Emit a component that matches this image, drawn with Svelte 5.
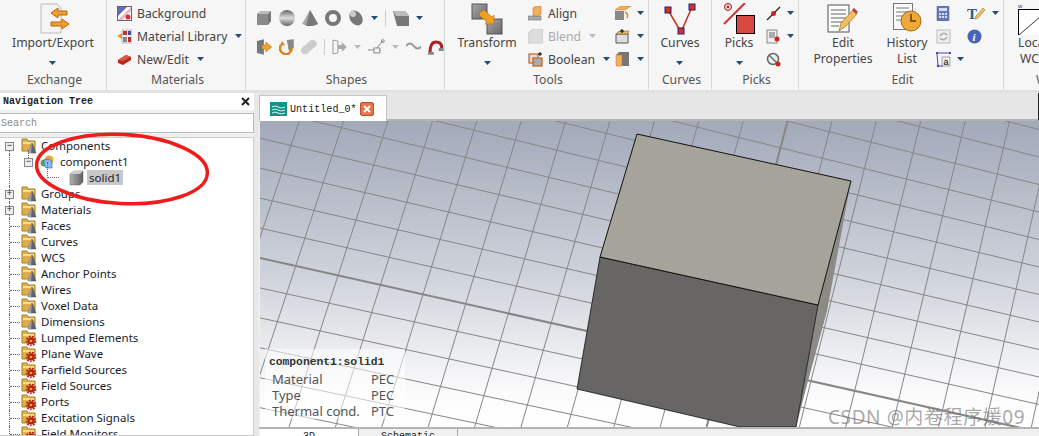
<script>
  const groups = ["Groups", "Materials"];
  const plainFolders = ["Faces", "Curves", "WCS", "Anchor Points", "Wires", "Voxel Data", "Dimensions"];
  const gearFolders = ["Lumped Elements", "Plane Wave", "Farfield Sources", "Field Sources", "Ports", "Excitation Signals", "Field Monitors"];

  // viewport grid, two line families fanned out a little for the perspective
  const top = 123;
  const bottom = 429;
  const steep = [];
  for (let i = -14; i < 12; i++) {
    const xt = 610 + i * 44.4;
    const xb = xt - 89 + (xt - 610) * 0.045;
    steep.push({ x1: xt, y1: top, x2: xb, y2: bottom, thick: i === 4 });
  }
  const shallow = [];
  for (let k = -16; k < 8; k++) {
    const yl = 327 + k * 29;
    const yr = 434 + k * 27.5;
    const slope = (yr - yl) / 479;
    shallow.push({ x1: 260, y1: yl - slope * 300, x2: 1039, y2: yr, thick: k === 0 });
  }
</script>

{#snippet arrow()}
  <svg class="arrow" width="7" height="4" viewBox="0 0 7 4"><path d="M0 0h7L3.500 4z" fill="#1f4e79" /></svg>
{/snippet}

{#snippet folder(gear)}
  <svg class="ticon" width="16" height="16" viewBox="0 0 16 16">
    <path d="M1 1h5l1 2h7v10H1z" fill="#e0b050" stroke="#a67c1e" />
    <path d="M2 4h11v2H2z" fill="#f5dc96" />
    {#if gear}
      <circle cx="10" cy="11" r="3.500" fill="#b81c1c" />
      <circle cx="10" cy="11" r="4.500" fill="none" stroke="#b81c1c" stroke-width="1.800" stroke-dasharray="1.700 1.400" />
      <circle cx="10" cy="11" r="1.300" fill="#f0c040" />
    {:else}
      <path d="M11 5l4 10H7z" fill="#5f6672" stroke="#4a4f58" stroke-width="0.500" />
      <path d="M11 5l-1 10H7z" fill="#a0a7b3" />
    {/if}
  </svg>
{/snippet}

{#snippet cubeSmall(c)}
  <svg width="16" height="16" viewBox="0 0 16 16">
    <path d="M1 4l4-3h10v10l-3 4H1z" fill={c} />
    <path d="M1 4h11v11H1z" fill="#8a8a8a" />
    <path d="M1 4l4-3h10l-3 3z" fill="#bbb" />
  </svg>
{/snippet}

<div class="app">
  <header class="ribbon">
    <section class="group" style="width: 107px">
      <div class="body">
        <div class="big">
          <svg width="32" height="32" viewBox="0 0 32 32">
            <path d="M4 1h16l4 4v25H4z" fill="#f4f4f4" stroke="#bbb" />
            <path d="M14 10l7-5v3h9v4h-9v3z" fill="#f0a030" stroke="#b8660e" />
            <path d="M32 21l-7-5v3h-11v4h11v3z" fill="#f0a030" stroke="#b8660e" />
          </svg>
          <span>Import/Export</span>
          {@render arrow()}
        </div>
      </div>
      <div class="label">Exchange</div>
    </section>

    <section class="group" style="width: 139px">
      <div class="body stack">
        <div class="item">
          <svg width="15" height="15" viewBox="0 0 15 15"><rect x="0.500" y="0.500" width="14" height="14" fill="#fff" stroke="#666" /><path d="M1 1h9L1 10z" fill="#6a6ab8" /><path d="M14 1v4L5 14H1z" fill="#e8b8c0" /><circle cx="11" cy="11" r="2.500" fill="#d83030" /></svg>
          <span>Background</span>
        </div>
        <div class="item">
          <svg width="15" height="15" viewBox="0 0 15 15"><path d="M0 7l5-3v6z" fill="#ee9a20" /><rect x="5" y="1" width="10" height="13" fill="#eee" stroke="#888" stroke-width="0.500" /><rect x="6" y="2" width="4" height="4" fill="#c03030" /><rect x="11" y="2" width="3" height="4" fill="#4050a0" /><rect x="6" y="8" width="4" height="5" fill="#888" /><rect x="11" y="8" width="3" height="5" fill="#c03030" /></svg>
          <span>Material Library</span>
          {@render arrow()}
        </div>
        <div class="item">
          <svg width="15" height="15" viewBox="0 0 15 15"><path d="M1 8l8-5 5 2v3l-8 5-5-2z" fill="#b8281c" /><path d="M1 8l8-5 5 2-8 4z" fill="#d85848" /></svg>
          <span>New/Edit</span>
          {@render arrow()}
        </div>
      </div>
      <div class="label">Materials</div>
    </section>

    <section class="group" style="width: 199px">
      <div class="body shapes">
        <div class="irow">
          {@render cubeSmall("#777")}
          <svg width="16" height="16" viewBox="0 0 16 16"><defs><linearGradient id="sph" x1="0" y1="0" x2="0" y2="1"><stop offset="0" stop-color="#666" /><stop offset="0.500" stop-color="#ddd" /><stop offset="1" stop-color="#666" /></linearGradient></defs><circle cx="8" cy="8" r="8" fill="url(#sph)" /></svg>
          <svg width="16" height="16" viewBox="0 0 16 16"><path d="M8 0L0 14q8 4 16 0z" fill="#aaa" /><path d="M8 0L4 16q6 1 12-2z" fill="#777" /></svg>
          <svg width="16" height="16" viewBox="0 0 16 16"><circle cx="8" cy="8" r="6" fill="none" stroke="#777" stroke-width="4" /></svg>
          <svg width="16" height="16" viewBox="0 0 16 16"><ellipse cx="8" cy="8" rx="6" ry="8" transform="rotate(-35 8 8)" fill="#777" /><ellipse cx="5" cy="4" rx="3" ry="3" fill="#ccc" /></svg>
          {@render arrow()}
          <i class="vsep"></i>
          <svg width="16" height="16" viewBox="0 0 16 16"><path d="M0 1h12l4 5v10H4z" fill="#777" /><path d="M0 1h12l4 5H3z" fill="#bbb" /></svg>
          {@render arrow()}
        </div>
        <div class="irow">
          <svg width="16" height="16" viewBox="0 0 16 16"><path d="M1 2l7-2v16l-7-2z" fill="#777" /><path d="M6 6h4V3l6 5-6 5v-3H6z" fill="#f0a030" stroke="#b8660e" stroke-width="0.500" /></svg>
          <svg width="16" height="16" viewBox="0 0 16 16"><path d="M8 1l7-1v9l-5 3z" fill="#888" /><path d="M2 6a6 6 0 1 0 11 3" fill="none" stroke="#e08018" stroke-width="2.500" /><path d="M3 2l-2 5 5-1z" fill="#e08018" /></svg>
          <svg class="dim" width="16" height="16" viewBox="0 0 16 16"><rect x="-1" y="4" width="18" height="8" rx="4" transform="rotate(-40 8 8)" fill="#ccc" /></svg>
          <i class="vsep"></i>
          <svg class="dim" width="16" height="16" viewBox="0 0 16 16"><path d="M1 1l5 1v12l-5 1z" fill="none" stroke="#999" /><path d="M6 6h4V3l5 5-5 5v-3H6z" fill="#aaa" /></svg>
          <span class="dimarrow">{@render arrow()}</span>
          <svg class="dim" width="18" height="16" viewBox="0 0 18 16"><rect x="6" y="9" width="6" height="5" fill="none" stroke="#888" /><path d="M0 11h6M12 11h1M9 9l6-7" stroke="#888" /><circle cx="15" cy="2" r="1.500" fill="none" stroke="#888" /></svg>
          <span class="dimarrow">{@render arrow()}</span>
          <svg class="dim" width="16" height="16" viewBox="0 0 16 16"><path d="M0 7q4-5 8 0t8 0" fill="none" stroke="#999" stroke-width="2" /></svg>
          <svg width="16" height="16" viewBox="0 0 16 16"><path d="M2 15q0-12 6-12t6 6" fill="none" stroke="#b02020" stroke-width="3" /><path d="M0 13h6v3H0zM11 9h5v3h-5z" fill="#888" /></svg>
        </div>
      </div>
      <div class="label">Shapes</div>
    </section>

    <section class="group" style="width: 204px">
      <div class="body tools">
        <div class="big" style="width: 78px">
          <svg width="32" height="32" viewBox="0 0 32 32">
            <defs><linearGradient id="sq" x1="0" y1="0" x2="1" y2="1"><stop offset="0" stop-color="#aaa" /><stop offset="1" stop-color="#666" /></linearGradient></defs>
            <rect x="1" y="1" width="15" height="15" fill="url(#sq)" stroke="#555" />
            <rect x="16" y="16" width="15" height="15" fill="url(#sq)" stroke="#555" />
            <path d="M9 9l4-2 8 7 2-2v9H14l2-2-8-7z" fill="#f0a020" stroke="#b86a10" stroke-width="0.600" />
          </svg>
          <span>Transform</span>
          {@render arrow()}
        </div>
        <div class="stack" style="width: 84px; margin-left: 2px">
          <div class="item">
            <svg width="15" height="15" viewBox="0 0 15 15"><path d="M0 10h13v4H0z" fill="#aaa" stroke="#666" stroke-width="0.500" /><path d="M5 2l3-2h5v8l-2 2H5z" fill="#f0b060" stroke="#b86a10" stroke-width="0.500" /></svg>
            <span>Align</span>
          </div>
          <div class="item disabled">
            <svg width="15" height="15" viewBox="0 0 15 15"><path d="M0 14V7q1-7 8-7h7v14z" fill="#ddd" stroke="#ccc" /></svg>
            <span>Blend</span>
            {@render arrow()}
          </div>
          <div class="item">
            <svg width="15" height="15" viewBox="0 0 15 15"><rect x="1" y="2" width="9" height="9" fill="#ddd" stroke="#c8601a" stroke-width="1.200" /><rect x="5" y="6" width="9" height="8" fill="#aaa" stroke="#c8601a" stroke-width="1.200" /><path d="M12 0v4M10 2h4" stroke="#000" /></svg>
            <span>Boolean</span>
            {@render arrow()}
          </div>
        </div>
        <div class="stack side" style="margin-left: 3px">
          <div class="item">
            <svg width="16" height="15" viewBox="0 0 16 15"><path d="M0 4l6-4h10l-6 4z" fill="#f0b060" stroke="#b86a10" stroke-width="0.500" /><path d="M0 5h9v9H0z" fill="#888" /><path d="M10 6a4 4 0 0 1 2 6" fill="none" stroke="#e08018" stroke-width="1.500" /></svg>
            {@render arrow()}
          </div>
          <div class="item">
            <svg width="16" height="15" viewBox="0 0 16 15"><path d="M1 5h12v9H1z" fill="#ddd" stroke="#555" /><path d="M1 5l3-3h10l-1 3z" fill="#f0b060" stroke="#555" stroke-width="0.500" /><path d="M7 0v4M5 2h4" stroke="#000" /></svg>
            {@render arrow()}
          </div>
          <div class="item">
            <svg width="16" height="15" viewBox="0 0 16 15"><path d="M1 3l3-3h10v14H1z" fill="#777" /><path d="M1 3h6v11H1z" fill="#f0b060" stroke="#c07020" stroke-width="0.500" /></svg>
            {@render arrow()}
          </div>
        </div>
      </div>
      <div class="label">Tools</div>
    </section>

    <section class="group" style="width: 63px">
      <div class="body">
        <div class="big">
          <svg width="32" height="32" viewBox="0 0 32 32">
            <path d="M4 7l13 22L28 4" fill="none" stroke="#c83020" stroke-width="1.500" />
            <rect x="1" y="4" width="6" height="6" fill="#d83020" stroke="#202080" />
            <rect x="25" y="1" width="6" height="6" fill="#d83020" stroke="#202080" />
            <rect x="14" y="25" width="6" height="6" fill="#d83020" stroke="#202080" />
          </svg>
          <span>Curves</span>
          {@render arrow()}
        </div>
      </div>
      <div class="label">Curves</div>
    </section>

    <section class="group" style="width: 87px">
      <div class="body picks">
        <div class="big" style="width: 54px">
          <svg width="32" height="32" viewBox="0 0 32 32">
            <circle cx="5" cy="4" r="3.500" fill="#f0d0d0" stroke="#a02020" /><circle cx="5" cy="4" r="1.200" fill="#a02020" />
            <path d="M1 21L22 0" stroke="#d03030" stroke-width="2" />
            <rect x="13.500" y="12.500" width="18" height="18" fill="#d84a40" stroke="#000" />
          </svg>
          <span>Picks</span>
          {@render arrow()}
        </div>
        <div class="stack side">
          <div class="item">
            <svg width="15" height="15" viewBox="0 0 15 15"><path d="M1 14L14 1" stroke="#222" stroke-width="1.200" /><circle cx="7.500" cy="7.500" r="2.500" fill="#d02020" /></svg>
            {@render arrow()}
          </div>
          <div class="item">
            <svg width="15" height="15" viewBox="0 0 15 15"><rect x="1" y="1" width="10" height="13" fill="#eee" stroke="#888" /><path d="M3 4h6M3 6h6M3 8h6" stroke="#666" /><circle cx="11" cy="10" r="2.500" fill="#d02020" /></svg>
            {@render arrow()}
          </div>
          <div class="item">
            <svg width="15" height="15" viewBox="0 0 15 15"><circle cx="7" cy="7" r="5.500" fill="#eee" stroke="#666" stroke-width="1.500" /><path d="M3 3l8 8" stroke="#666" stroke-width="1.500" /><circle cx="12" cy="12" r="2.500" fill="#d02020" /></svg>
          </div>
        </div>
      </div>
      <div class="label">Picks</div>
    </section>

    <section class="group" style="width: 205px">
      <div class="body edit">
        <div class="big" style="width: 88px">
          <svg width="32" height="32" viewBox="0 0 32 32">
            <rect x="1" y="2" width="21" height="27" fill="#fafafa" stroke="#555" />
            <path d="M4 7h15M4 11h15M4 15h15M4 19h12M4 23h8" stroke="#666" />
            <path d="M12 28l2-8 12-13 4 4-12 13z" fill="#f0c060" stroke="#8a6020" stroke-width="0.600" />
            <path d="M25 7l2-2 4 4-2 2z" fill="#b84030" />
          </svg>
          <span class="twoline">Edit<br />Properties</span>
        </div>
        <div class="big" style="width: 48px; margin-left: -4px">
          <svg width="32" height="32" viewBox="0 0 32 32">
            <rect x="2.500" y="0.500" width="19" height="26" fill="#fafafa" stroke="#777" />
            <path d="M5 5h13M5 9h13M5 13h8M5 17h6" stroke="#777" />
            <circle cx="20" cy="18" r="10" fill="#f0a838" stroke="#a86810" />
            <path d="M20 11v7h5" fill="none" stroke="#6b3a08" stroke-width="1.500" />
          </svg>
          <span class="twoline">History<br />List</span>
        </div>
        <div class="stack side" style="margin-left: 5px">
          <div class="item">
            <svg width="15" height="15" viewBox="0 0 15 15"><rect x="1" y="0" width="12" height="15" rx="1" fill="#6878b8" stroke="#405090" stroke-width="0.500" /><path d="M3 2h8v3H3z" fill="#cfe0f4" /><path d="M3 7h2v2H3zM6 7h2v2H6zM9 7h2v2H9zM3 10h2v2H3zM6 10h2v2H6zM9 10h2v2H9z" fill="#d8e0f0" /></svg>
          </div>
          <div class="item">
            <svg class="dim" width="15" height="15" viewBox="0 0 15 15"><rect x="1" y="1" width="13" height="13" fill="#eee" stroke="#bbb" /><path d="M4 7a4 4 0 0 1 7-1M11 8a4 4 0 0 1-7 1" fill="none" stroke="#aaa" stroke-width="1.500" /></svg>
          </div>
          <div class="item">
            <svg width="15" height="15" viewBox="0 0 15 15"><path d="M1 1h13M1 1l1 13M2 14h5" fill="none" stroke="#5040b0" /><rect x="6" y="5" width="8" height="9" fill="#eee" stroke="#555" stroke-width="0.500" /><circle cx="1" cy="1" r="1.200" fill="#5040b0" /><circle cx="14" cy="1" r="1.200" fill="#5040b0" /><circle cx="2" cy="14" r="1.200" fill="#5040b0" /><text x="7.500" y="13" font-size="9" font-family="Liberation Sans">a</text></svg>
            {@render arrow()}
          </div>
        </div>
        <div class="stack side" style="margin-left: 3px">
          <div class="item">
            <svg width="19" height="15" viewBox="0 0 19 15"><text x="0" y="13" font-size="15" font-weight="bold" fill="#2a5a90" font-family="Liberation Serif">T</text><path d="M8 13l1-3 7-8 2 2-7 8z" fill="#f0c060" stroke="#8a6020" stroke-width="0.500" /></svg>
            {@render arrow()}
          </div>
          <div class="item">
            <svg width="15" height="15" viewBox="0 0 15 15"><circle cx="7.500" cy="7.500" r="7" fill="#4a64b8" /><text x="5.500" y="12" font-size="11" font-weight="bold" font-style="italic" fill="#fff" font-family="Liberation Serif">i</text></svg>
          </div>
        </div>
      </div>
      <div class="label">Edit</div>
    </section>

    <section class="group last">
      <div class="body">
        <div class="big wcsbox">
          <svg width="32" height="32" viewBox="0 0 32 32"><text x="0" y="5" font-size="6" fill="#4030a0" font-family="Liberation Sans">w</text><rect x="0.500" y="6.500" width="30" height="26" fill="#fff" stroke="#000" /><path d="M1 32L30 7" stroke="#333" /></svg>
          <span class="twoline">Local<br />WCS</span>
        </div>
      </div>
      <div class="label lastlabel">WCS</div>
    </section>
  </header>

  <main class="work">
    <aside class="nav">
      <div class="navtitle">
        <span>Navigation Tree</span>
        <svg width="9" height="9" viewBox="0 0 9 9"><path d="M1 1l7 7M8 1l-7 7" stroke="#222" stroke-width="2" /></svg>
      </div>
      <div class="search">Search</div>
      <div class="tree">
        <div class="row">
          <i class="guide first"></i><i class="box">−</i>
          {@render folder(false)}
          <span>Components</span>
        </div>
        <div class="row">
          <i class="guide"></i>
          <i class="indent"><i class="box small">−</i></i>
          <svg class="ticon" width="15" height="15" viewBox="0 0 15 15"><circle cx="9" cy="5" r="4.500" fill="#e8a830" /><circle cx="4" cy="8" r="3.500" fill="#58a848" /><path d="M4 5l5-1 3 3v6H6l-2-3z" fill="#8ab8f0" stroke="#3060a0" stroke-width="0.600" /></svg>
          <span>component1</span>
        </div>
        <div class="row">
          <i class="guide"></i>
          <i class="indent deep"></i>
          <svg class="ticon" width="15" height="16" viewBox="0 0 15 16">
            <defs><linearGradient id="sol" x1="0" y1="0" x2="1" y2="0"><stop offset="0" stop-color="#b0b0b0" /><stop offset="1" stop-color="#606060" /></linearGradient></defs>
            <path d="M1 4l4-3h9v11l-3 3H1z" fill="url(#sol)" stroke="#666" stroke-width="0.500" /><path d="M1 4l4-3h9l-3 3z" fill="#ccc" />
          </svg>
          <span class="selected">solid1</span>
        </div>
        {#each groups as g}
          <div class="row">
            <i class="guide"></i><i class="box">+</i>
            {@render folder(false)}
            <span>{g}</span>
          </div>
        {/each}
        {#each plainFolders as f}
          <div class="row">
            <i class="guide"></i><i class="tick"></i>
            {@render folder(false)}
            <span>{f}</span>
          </div>
        {/each}
        {#each gearFolders as f}
          <div class="row">
            <i class="guide"></i><i class="tick"></i>
            {@render folder(true)}
            <span>{f}</span>
          </div>
        {/each}
      </div>
    </aside>

    <div class="split"></div>

    <section class="view">
      <div class="tabs">
        <div class="tab">
          <svg width="17" height="14" viewBox="0 0 17 14"><rect width="17" height="14" fill="#0e9488" /><path d="M2 5q3-2 6 0t7 0M2 8q3-2 6 0t7 0M2 11q3-2 6 0t7 0" fill="none" stroke="#d8f4f0" /></svg>
          <span>Untitled_0*</span>
          <svg width="14" height="14" viewBox="0 0 14 14"><rect x="0.500" y="0.500" width="13" height="13" rx="1.500" fill="#ee7048" stroke="#b85030" /><path d="M4 4l6 6M10 4l-6 6" stroke="#fff" stroke-width="2" /></svg>
        </div>
      </div>
      <div class="canvas">
        <svg class="scene" width="779" height="306" viewBox="260 123 779 306">
          <defs>
            <linearGradient id="sky" x1="0" y1="0" x2="0" y2="1">
              <stop offset="0" stop-color="#a2a9b9" />
              <stop offset="0.500" stop-color="#ced2da" />
              <stop offset="0.900" stop-color="#fcfcfd" />
              <stop offset="1" stop-color="#fff" />
            </linearGradient>
          </defs>
          <rect x="260" y="123" width="779" height="306" fill="url(#sky)" />
          {#each steep as l}
            <line x1={l.x1} y1={l.y1} x2={l.x2} y2={l.y2} stroke="#868686" stroke-width={l.thick ? 2 : 1} />
          {/each}
          {#each shallow as l}
            <line x1={l.x1} y1={l.y1} x2={l.x2} y2={l.y2} stroke="#868686" stroke-width={l.thick ? 2 : 1} />
          {/each}
          <polygon points="851,183 827,313 808,383 796,429 818,307" fill="#8b8a85" />
          <polygon points="600,259 818,307 796,429 740,429 577,391" fill="#686664" stroke="#111" stroke-width="0.800" />
          <polygon points="637,136 851,183 818,307 600,259" fill="#a5a39a" stroke="#111" stroke-width="1" />
        </svg>
        <div class="info">
          <h4>component1:solid1</h4>
          <dl>
            <dt>Material</dt><dd>PEC</dd>
            <dt>Type</dt><dd>PEC</dd>
            <dt>Thermal cond.</dt><dd>PTC</dd>
          </dl>
        </div>
        <div class="mark">CSDN @内卷程序媛09</div>
      </div>
      <div class="bottomtabs">
        <div class="btab on">3D</div>
        <div class="btab">Schematic</div>
      </div>
    </section>

    <svg class="circle" width="190" height="90" viewBox="0 0 190 90">
      <ellipse cx="95" cy="45" rx="85.500" ry="34.500" fill="none" stroke="#f01c1c" stroke-width="3.500" transform="rotate(3 95 45)" />
    </svg>
  </main>
</div>

<style>
  :global(body) {
    margin: 0;
    overflow: hidden;
  }
  .app {
    width: 1039px;
    height: 436px;
    overflow: hidden;
    display: flex;
    flex-direction: column;
    background: #f0f0f0;
    font-family: "Noto Sans", sans-serif;
  }
  .ribbon {
    height: 90px;
    flex: none;
    display: flex;
    background: #f6f6f6;
    border-bottom: 3px solid #e2e2e2;
    color: #444;
    font-size: 12.2px;
  }
  .group {
    box-sizing: border-box;
    flex: none;
    display: flex;
    flex-direction: column;
    height: 90px;
    border-right: 1px solid #d8d8d8;
    overflow: hidden;
  }
  .group.last {
    flex: 1;
    border-right: none;
  }
  .body {
    box-sizing: border-box;
    height: 70px;
    display: flex;
    justify-content: center;
  }
  .last .body {
    justify-content: flex-start;
  }
  .label {
    height: 20px;
    line-height: 20px;
    padding-left: 3px;
    text-align: center;
    color: #555;
  }
  .lastlabel {
    padding-left: 32px;
    text-align: left;
  }
  .big {
    flex: none;
    display: flex;
    flex-direction: column;
    align-items: center;
    padding-top: 3px;
    line-height: 16px;
    white-space: nowrap;
  }
  .big svg:first-child {
    height: 32px;
  }
  .big .arrow {
    margin-top: 10px;
  }
  .twoline {
    text-align: center;
    line-height: 16px;
  }
  .wcsbox {
    align-items: flex-start;
    width: 30px;
    margin-left: 14px;
  }
  .stack {
    flex: none;
    display: flex;
    flex-direction: column;
    padding-top: 5px;
    gap: 7px;
  }
  .body.stack {
    align-items: flex-start;
    justify-content: flex-start;
    padding-left: 10px;
  }
  .item {
    display: flex;
    align-items: center;
    gap: 5px;
    height: 16px;
    white-space: nowrap;
  }
  .item .arrow {
    margin-left: 3px;
  }
  .disabled {
    color: #aaa;
  }
  .disabled .arrow path,
  .dimarrow .arrow path {
    fill: #bbb;
  }
  .side .item {
    gap: 3px;
  }
  .shapes {
    flex-direction: column;
    justify-content: flex-start;
    padding: 9px 0 0 10px;
    gap: 11px;
  }
  .irow {
    display: flex;
    align-items: center;
    gap: 7px;
    height: 18px;
  }
  .vsep {
    width: 1px;
    height: 16px;
    background: #ccc;
  }
  .dimarrow {
    display: flex;
    margin-left: -1px;
  }
  .tools {
    justify-content: flex-start;
    padding-left: 3px;
  }
  .picks,
  .edit {
    justify-content: flex-start;
  }
  .work {
    position: relative;
    flex: 1;
    display: flex;
    min-height: 0;
  }
  .nav {
    width: 254px;
    flex: none;
    display: flex;
    flex-direction: column;
    background: #f0f0f0;
  }
  .navtitle {
    height: 17px;
    flex: none;
    display: flex;
    align-items: center;
    justify-content: space-between;
    padding: 0 4px 0 3px;
    background: #fff;
    font: bold 10px/17px "Liberation Mono", monospace;
    color: #222;
  }
  .search {
    box-sizing: border-box;
    height: 20px;
    flex: none;
    margin-top: 3px;
    padding-left: 1px;
    background: #fff;
    border: 1px solid #bbb;
    border-left: none;
    font: 10px/20px "Liberation Mono", monospace;
    color: #888;
  }
  .tree {
    box-sizing: border-box;
    flex: 1;
    margin-top: 4px;
    background: #fff;
    border: 1px solid #ccc;
    border-left: none;
    overflow: hidden;
    font: 11.5px/15px "Noto Sans", sans-serif;
    color: #1a1a2a;
  }
  .row {
    position: relative;
    height: 16px;
    display: flex;
    align-items: center;
    white-space: nowrap;
  }
  .row span {
    margin-top: -1px;
  }
  .guide {
    position: absolute;
    left: 9px;
    top: 0;
    height: 16px;
    border-left: 1px dotted #666;
  }
  .guide.first {
    top: 8px;
    height: 8px;
  }
  .box {
    position: absolute;
    left: 5px;
    top: 4px;
    box-sizing: border-box;
    width: 9px;
    height: 9px;
    background: #eee;
    border: 1px solid #888;
    font: normal 9px/6px "Liberation Mono", monospace;
    text-align: center;
    color: #222;
  }
  .tick {
    position: absolute;
    left: 10px;
    top: 8px;
    width: 10px;
    border-top: 1px dotted #666;
  }
  .indent {
    position: absolute;
    left: 28px;
    top: -4px;
    height: 12px;
    border-left: 1px dotted #666;
  }
  .indent.deep {
    left: 47px;
    top: -8px;
    width: 11px;
    height: 15px;
    border-bottom: 1px dotted #666;
  }
  .box.small {
    left: -5px;
    top: 8px;
  }
  .ticon {
    flex: none;
    margin-left: 21px;
    margin-right: 4px;
  }
  .row:nth-child(2) .ticon {
    margin-left: 40px;
    margin-right: 5px;
  }
  .row:nth-child(3) .ticon {
    margin-left: 69px;
    margin-right: 3px;
  }
  .selected {
    padding: 0 2px;
    background: #c8c8c8;
  }
  .split {
    width: 5px;
    flex: none;
    background: #e8e8e8;
  }
  .view {
    flex: 1;
    display: flex;
    flex-direction: column;
    min-width: 0;
  }
  .tabs {
    height: 28px;
    flex: none;
    box-sizing: border-box;
    padding-top: 2px;
    background: #e6e6e6;
    border-bottom: 2px solid #b4b4b4;
    border-right: 1px solid #222;
  }
  .tab {
    box-sizing: border-box;
    width: 128px;
    height: 26px;
    display: flex;
    align-items: center;
    gap: 3px;
    padding: 1px 0 0 10px;
    background: #fff;
    border: 1px solid #c4c4c4;
    border-bottom: none;
    font: 10.1px "Liberation Mono", monospace;
    color: #222;
  }
  .canvas {
    position: relative;
    flex: none;
    height: 306px;
    overflow: hidden;
    background: #fff;
    margin-left: 1px;
  }
  .scene {
    display: block;
  }
  .info {
    position: absolute;
    left: 5px;
    top: 228px;
    width: 140px;
    height: 70px;
    box-sizing: border-box;
    padding: 6px 0 0 4px;
    background: rgba(255, 255, 255, 0.55);
    color: #555;
  }
  .info h4 {
    margin: 0 0 2px;
    font: bold 11.3px/14px "Liberation Mono", monospace;
    color: #333;
  }
  .info dl {
    margin: 0;
    padding-left: 3px;
    display: grid;
    grid-template-columns: 99px auto;
    font-size: 13px;
    line-height: 16px;
  }
  .info dt,
  .info dd {
    margin: 0;
  }
  .mark {
    position: absolute;
    left: 568px;
    top: 283px;
    font: 19px/26px "Noto Sans", "Noto Sans CJK SC", sans-serif;
    letter-spacing: 0.6px;
    color: rgba(110, 110, 110, 0.6);
    white-space: nowrap;
  }
  .bottomtabs {
    flex: 1;
    display: flex;
    box-sizing: border-box;
    background: #f0f0f0;
    border-top: 2px solid #b4b4b4;
    font: 10px/12px "Liberation Mono", monospace;
    color: #222;
    overflow: hidden;
  }
  .btab {
    box-sizing: border-box;
    width: 99px;
    text-align: center;
    border-right: 1px solid #aaa;
    padding-top: 2px;
  }
  .btab.on {
    background: #fff;
    margin-left: 1px;
  }
  .circle {
    position: absolute;
    left: 27px;
    top: 31px;
    pointer-events: none;
  }
</style>
